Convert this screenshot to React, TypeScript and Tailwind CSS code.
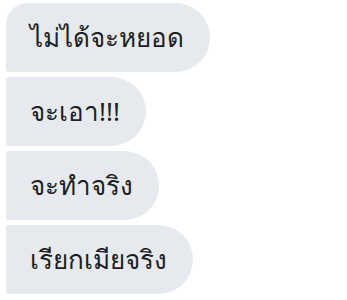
const messages = [
  { text: "ไม่ได้จะหยอด", shape: "rounded-tl-[22px] rounded-bl-[3px]" },
  { text: "จะเอา!!!", shape: "rounded-l-[3px]" },
  { text: "จะทำจริง", shape: "rounded-l-[3px]" },
  { text: "เรียกเมียจริง", shape: "rounded-l-[3px]" },
];

export default function App() {
  return (
    <div className="w-[347px] h-[300px] bg-white overflow-hidden pt-[3px] pl-[6px] flex flex-col items-start gap-[5px] font-['Noto_Sans',sans-serif]">
      {messages.map((m) => (
        <div
          key={m.text}
          className={`h-[69px] flex items-center pl-6 pr-[26px] bg-[#e6e9ed] text-[#1c1e21] text-[26px] rounded-r-[35px] ${m.shape}`}
        >
          {m.text}
        </div>
      ))}
    </div>
  );
}
